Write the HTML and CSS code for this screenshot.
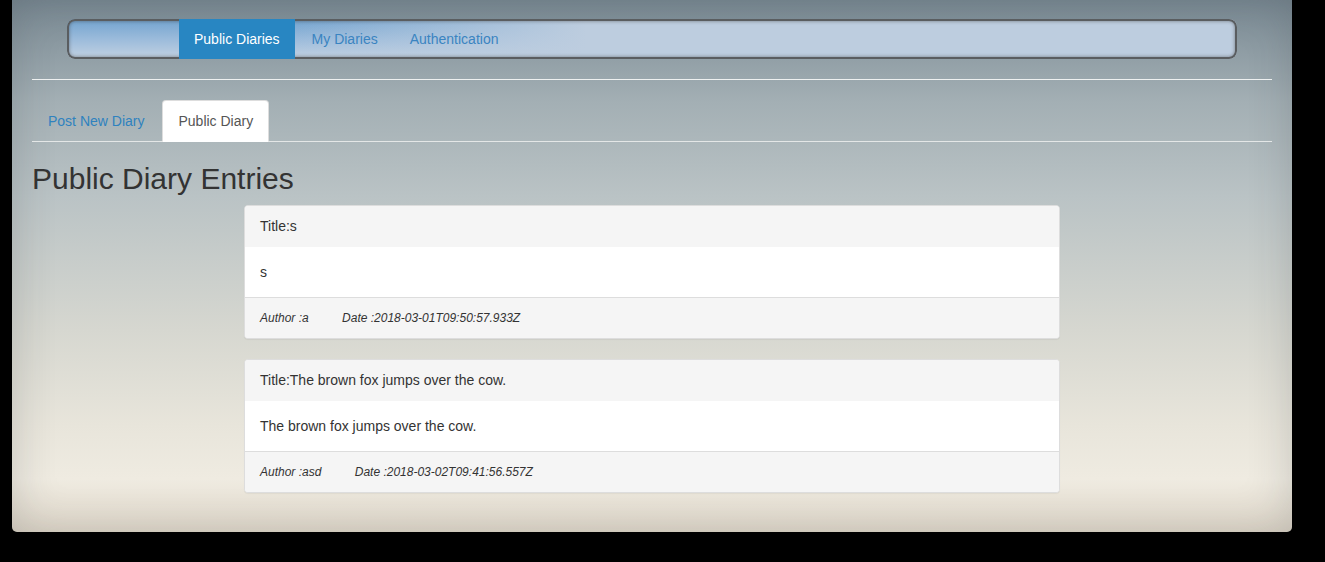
FILE: index.html
```html
<!DOCTYPE html>
<html>
<head>
<meta charset="utf-8">
<title>Public Diaries</title>
<link rel="stylesheet" href="styles.css">
</head>
<body>
<div class="page">
  <nav class="navbar">
    <ul class="nav-links">
      <li><a class="nav-link active" href="#">Public Diaries</a></li>
      <li><a class="nav-link" href="#">My Diaries</a></li>
      <li><a class="nav-link" href="#">Authentication</a></li>
    </ul>
  </nav>
  <hr class="rule">
  <ul class="tabs">
    <li><a class="tab" href="#">Post New Diary</a></li>
    <li><a class="tab tab-active" href="#">Public Diary</a></li>
  </ul>
  <h2 class="title">Public Diary Entries</h2>
  <div class="entries">
    <div class="panel">
      <div class="panel-heading">Title:s</div>
      <div class="panel-body">s</div>
      <div class="panel-footer"><span class="author">Author :a</span> <span>Date :2018-03-01T09:50:57.933Z</span></div>
    </div>
    <div class="panel">
      <div class="panel-heading">Title:The brown fox jumps over the cow.</div>
      <div class="panel-body">The brown fox jumps over the cow.</div>
      <div class="panel-footer"><span class="author">Author :asd</span> <span>Date :2018-03-02T09:41:56.557Z</span></div>
    </div>
  </div>
</div>
</body>
</html>
```
FILE: styles.css
```css
* { box-sizing: border-box; }
html, body { margin: 0; padding: 0; background: #000; height: 100%; }
body {
  font-family: "Liberation Sans", Arial, sans-serif;
  font-size: 14px;
  line-height: 20px;
  color: #333;
  overflow: hidden;
}
.page {
  margin-left: 12px;
  width: 1280px;
  height: 532px;
  padding: 19px 20px 20px;
  border-radius: 0 0 5px 5px;
  background: linear-gradient(to bottom, #7a8a94 0%, #a3afb4 19%, #bac3c5 37%, #d6d7d0 62%, #e8e5db 80%, #efebe1 90%, #e2dacc 100%);
  box-shadow: inset 0 0 45px rgba(40, 45, 50, 0.2);
}
.navbar {
  width: 1170px;
  height: 40px;
  margin: 0 auto;
  border-radius: 8px;
  background:
    linear-gradient(to right, rgba(189,205,223,0) 0, rgba(189,205,223,0) 230px, rgba(189,205,223,1) 520px),
    linear-gradient(to bottom, #72a3cf 0%, #9bbbdb 50%, #c3d2e2 100%);
  box-shadow: inset 0 0 0 2px #5a5d60, inset 0 0 3px 3px rgba(60, 60, 60, 0.35);
  overflow: hidden;
}
.nav-links {
  list-style: none;
  margin: 0;
  padding: 0 0 0 110px;
  display: flex;
  height: 100%;
}
.nav-links li { margin-left: 2px; }
.nav-link {
  display: block;
  height: 40px;
  padding: 10px 15px;
  color: #3a84c1;
  text-decoration: none;
}
.nav-link.active {
  background: #2886c2;
  color: #fff;
}
.rule {
  margin: 20px 0;
  border: 0;
  border-top: 1px solid #eef0f0;
  height: 0;
}
.tabs {
  list-style: none;
  margin: 0;
  padding: 0;
  display: flex;
  border-bottom: 1px solid #e4e7e7;
}
.tabs li { margin-bottom: -1px; margin-right: 2px; }
.tab {
  display: block;
  padding: 10px 15px;
  border: 1px solid transparent;
  border-radius: 4px 4px 0 0;
  color: #2f82bf;
  text-decoration: none;
}
.tab-active {
  background: #fff;
  border-color: #ddd #ddd transparent;
  color: #555;
}
.title {
  margin: 20px 0 10px;
  font-size: 30px;
  line-height: 33px;
  font-weight: 500;
  color: #333;
}
.entries {
  width: 816px;
  margin: 0 auto;
}
.panel {
  background: #fff;
  border: 1px solid #ddd;
  border-radius: 4px;
  margin-bottom: 20px;
  box-shadow: 0 1px 1px rgba(0, 0, 0, 0.05);
  overflow: hidden;
}
.panel-heading {
  background: #f5f5f5;
  padding: 10px 15px;
  border-bottom: 1px solid transparent;
}
.panel-body { padding: 15px; }
.panel-footer {
  background: #f5f5f5;
  border-top: 1px solid #ddd;
  padding: 10px 15px;
  font-size: 12px;
  font-style: italic;
}
.author { margin-right: 30px; }
```
